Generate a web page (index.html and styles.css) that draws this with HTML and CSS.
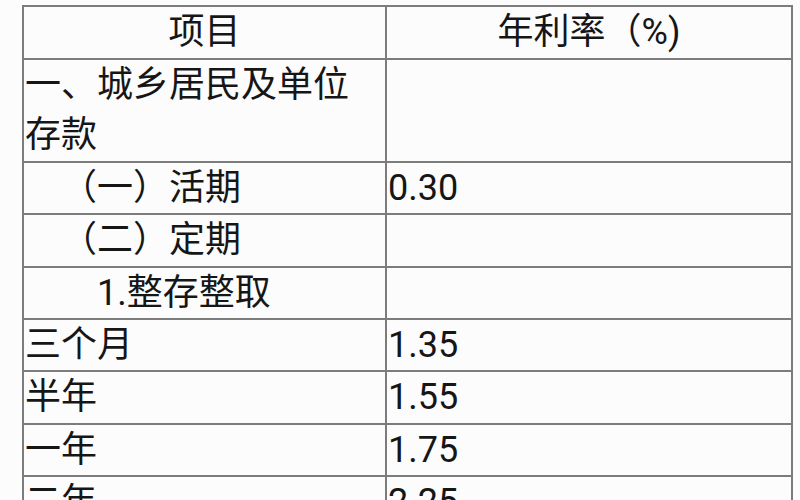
FILE: index.html
```html
<!DOCTYPE html>
<html lang="zh-CN">
<head>
<meta charset="utf-8">
<title>存款利率</title>
<link rel="stylesheet" href="styles.css">
</head>
<body>
<table class="rates">
  <colgroup>
    <col class="col-item">
    <col class="col-rate">
  </colgroup>
  <thead>
    <tr class="head-row">
      <th>项目</th>
      <th>年利率（%)</th>
    </tr>
  </thead>
  <tbody>
    <tr><td>一、城乡居民及单位<br>存款</td><td></td></tr>
    <tr><td class="indent1">（一）活期</td><td>0.30</td></tr>
    <tr><td class="indent1">（二）定期</td><td></td></tr>
    <tr><td class="indent2">1.整存整取</td><td></td></tr>
    <tr><td>三个月</td><td>1.35</td></tr>
    <tr><td>半年</td><td>1.55</td></tr>
    <tr><td>一年</td><td>1.75</td></tr>
    <tr><td>二年</td><td>2.25</td></tr>
  </tbody>
</table>
</body>
</html>
```
FILE: styles.css
```css
html, body {
  margin: 0;
  padding: 0;
  background: #fcfcfd;
  overflow: hidden;
}

body {
  font-family: Roboto, "Noto Sans CJK SC", sans-serif;
  color: #161616;
}

.rates {
  border-collapse: collapse;
  table-layout: fixed;
  width: 769px;
  margin: 5px 0 0 22px;
  font-size: 36px;
}

.col-item { width: 363px; }
.col-rate { width: 406px; }

.rates th,
.rates td {
  border: 2px solid #7c7c7c;
  padding: 0 1px;
  line-height: 50.4px;
  vertical-align: middle;
  text-align: left;
  font-weight: normal;
}

.rates .head-row th {
  text-align: center;
  line-height: 51px;
}

.rates td.indent1 { padding-left: 37px; }
.rates td.indent2 { padding-left: 73px; }
```
